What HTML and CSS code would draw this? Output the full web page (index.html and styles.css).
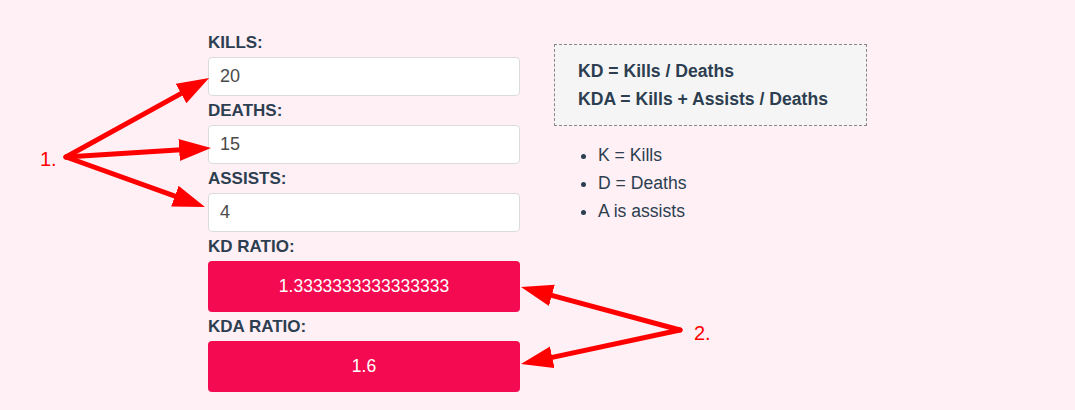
FILE: index.html
```html
<!DOCTYPE html>
<html lang="en">

<head>
    <meta charset="UTF-8">
    <meta name="viewport" content="width=device-width, initial-scale=1.0">
    <title>KD / KDA Calculator</title>
    <link rel="stylesheet" href="styles.css">
</head>

<body>
    <div class="page">
        <div class="calculator">
            <div class="fields">
                <label for="kills">KILLS:</label>
                <input type="text" id="kills" value="20">

                <label for="deaths">DEATHS:</label>
                <input type="text" id="deaths" value="15">

                <label for="assists">ASSISTS:</label>
                <input type="text" id="assists" value="4">

                <label>KD RATIO:</label>
                <div class="result" id="kd">1.3333333333333333</div>

                <label>KDA RATIO:</label>
                <div class="result" id="kda">1.6</div>
            </div>

            <div class="info">
                <div class="formula">
                    <p>KD = Kills / Deaths</p>
                    <p>KDA = Kills + Assists / Deaths</p>
                </div>
                <ul class="legend">
                    <li>K = Kills</li>
                    <li>D = Deaths</li>
                    <li>A is assists</li>
                </ul>
            </div>
        </div>

        <!-- annotations drawn over the screenshot -->
        <svg class="notes" width="1075" height="410" viewBox="0 0 1075 410">
            <defs>
                <marker id="head" markerUnits="userSpaceOnUse" markerWidth="34" markerHeight="24" refX="6" refY="11"
                    orient="auto">
                    <path d="M0,0 L32,11 L0,22 z" fill="#ff0000" />
                </marker>
            </defs>
            <g stroke="#ff0000" stroke-width="5" stroke-linecap="round" fill="none">
                <line x1="66" y1="157" x2="186.3" y2="90.6" marker-end="url(#head)" />
                <line x1="66" y1="157" x2="185.1" y2="149.6" marker-end="url(#head)" />
                <line x1="66" y1="157" x2="180.5" y2="198.2" marker-end="url(#head)" />
                <line x1="680" y1="330" x2="546.1" y2="293.8" marker-end="url(#head)" />
                <line x1="680" y1="330" x2="546.4" y2="358.6" marker-end="url(#head)" />
            </g>
            <text x="40" y="166" class="note-text">1.</text>
            <text x="694" y="340" class="note-text">2.</text>
        </svg>
    </div>

    <script>
        const kills = document.getElementById('kills');
        const deaths = document.getElementById('deaths');
        const assists = document.getElementById('assists');

        function update() {
            const k = Number(kills.value) || 0;
            const d = Number(deaths.value) || 0;
            const a = Number(assists.value) || 0;
            document.getElementById('kd').textContent = k / d;
            document.getElementById('kda').textContent = (k + a) / d;
        }

        [kills, deaths, assists].forEach(input => input.addEventListener('input', update));
    </script>
</body>

</html>
```

FILE: styles.css
```css
body {
    font-family: 'Liberation Sans', Arial, sans-serif;
    font-size: 17.6px;
    background-color: lavenderblush;
    color: #2c3e50;
    margin: 0;
}

.page {
    position: relative;
    width: 1075px;
    height: 410px;
}

.calculator {
    display: flex;
    justify-content: center;
    gap: 34px;
    padding-top: 33px;
}

.fields {
    width: 312px;
    display: flex;
    flex-direction: column;
}

label {
    font-weight: bold;
    font-size: 17px;
    line-height: 20px;
    margin-bottom: 4px;
}

input[type="text"] {
    box-sizing: border-box;
    height: 39px;
    margin: 0 0 5px;
    padding: 0 11px;
    border: 1px solid #dcdcdc;
    border-radius: 4px;
    background: white;
    font-family: inherit;
    font-size: 18px;
    color: #4a4a4a;
}

.result {
    height: 51px;
    margin-bottom: 5px;
    border-radius: 4px;
    background-color: #f30a50;
    color: white;
    font-size: 17.5px;
    display: flex;
    align-items: center;
    justify-content: center;
}

.info {
    width: 313px;
    padding-top: 11px;
}

.formula {
    border: 1px dashed #888;
    background-color: #f5f5f5;
    padding: 12px 23px;
}

.formula p {
    margin: 0;
    font-weight: bold;
    line-height: 28px;
}

.legend {
    margin: 15px 0 0;
    padding-left: 44px;
}

.legend li {
    line-height: 28px;
}

.notes {
    position: absolute;
    top: 0;
    left: 0;
    pointer-events: none;
}

.note-text {
    fill: #ff0000;
    font-family: 'Liberation Sans', Arial, sans-serif;
    font-size: 20px;
}
```
